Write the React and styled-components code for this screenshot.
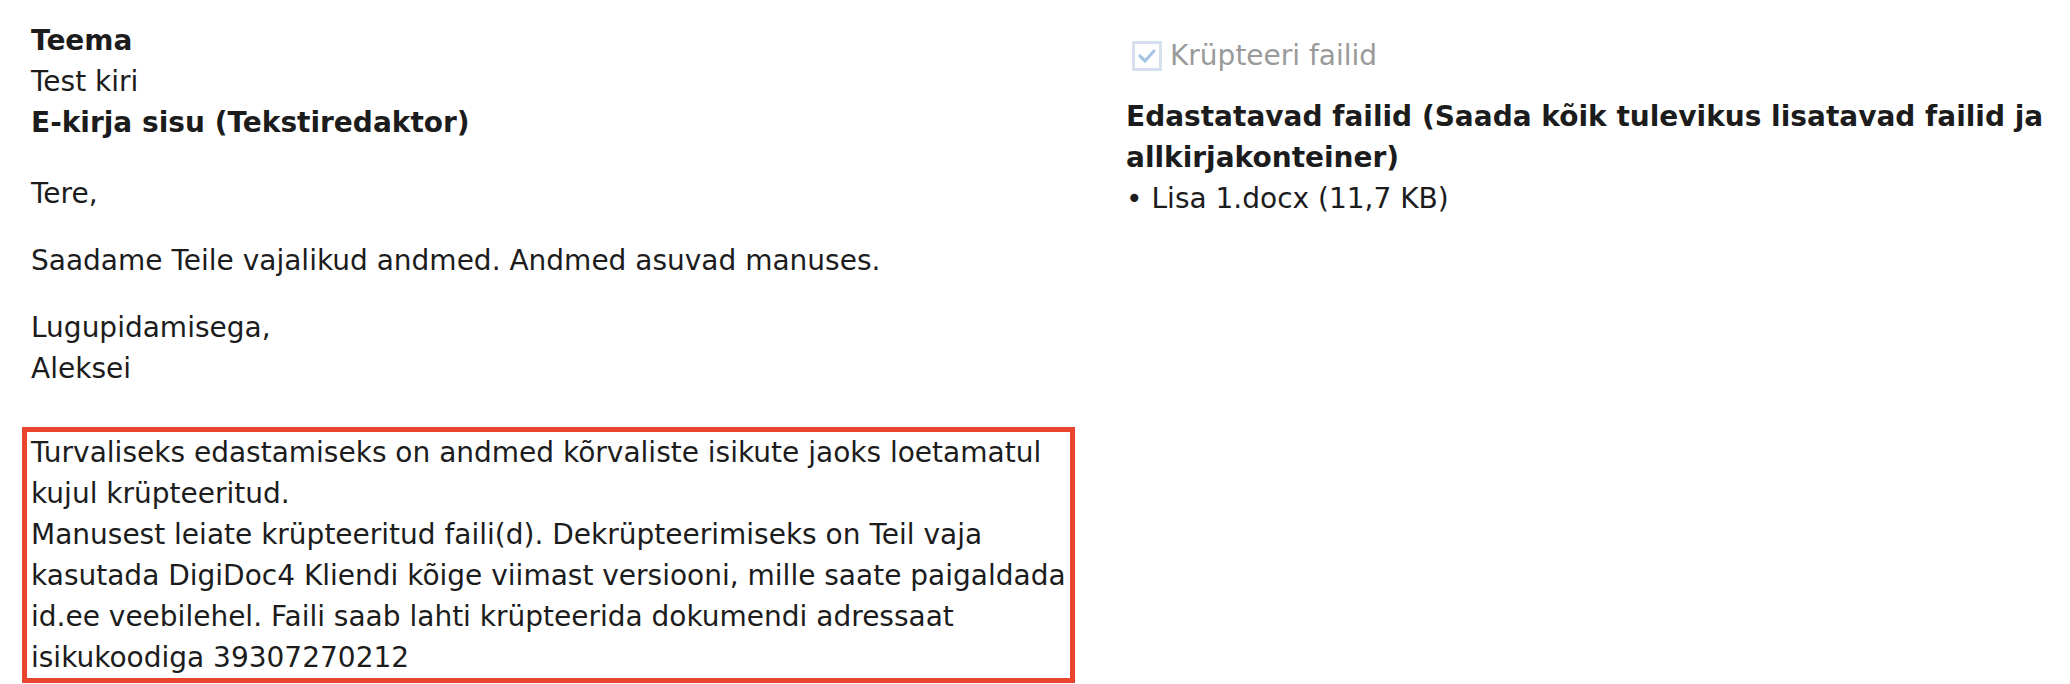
import React from 'react';
import styled, { createGlobalStyle } from 'styled-components';

const GlobalStyle = createGlobalStyle`
  html, body {
    margin: 0;
    background: #fff;
  }
  body {
    font-family: "DejaVu Sans", Verdana, sans-serif;
    font-size: 28px;
    line-height: 41px;
    color: #1c1c1c;
  }
`;

const Page = styled.div`
  display: grid;
  grid-template-columns: 1053px 1fr;
  column-gap: 51px;
  padding: 0 22px;
`;

const Column = styled.div`
  padding-top: ${p => p.$top}px;
  display: flex;
  flex-direction: column;
`;

const Field = styled.div`
  padding-left: 9px;
`;

const Label = styled.div`
  font-weight: bold;
`;

const Value = styled.div``;

const Message = styled.div`
  padding-left: 9px;
  margin-top: 4px;

  p {
    margin: 26px 0 0;
  }
`;

const Notice = styled.div`
  margin-top: 38px;
  border: 5px solid #e8452c;
  padding: 0 4px;
`;

const CheckRow = styled.label`
  display: flex;
  align-items: center;
  gap: 8px;
  color: #9a9a9a;
`;

const CheckBox = styled.span`
  box-sizing: border-box;
  width: 30px;
  height: 30px;
  margin-left: 6px;
  border: 3px solid #d4e0ee;
  background: #fff;
  display: flex;
  align-items: center;
  justify-content: center;
`;

const FilesTitle = styled.div`
  margin-top: 20px;
  font-weight: bold;
`;

const FileList = styled.ul`
  margin: 0;
  padding: 0;
  list-style: none;
`;

const FileItem = styled.li`
  &::before {
    content: "•";
    margin-right: 9px;
  }
`;

const CheckIcon = () => (
  <svg width="20" height="16" viewBox="0 0 20 16">
    <polyline points="3,8 8,13 17,3" fill="none" stroke="#a8c4e3" strokeWidth="3.2" strokeLinecap="round" strokeLinejoin="round" />
  </svg>
);

const App = () => {
  return (
    <>
      <GlobalStyle />
      <Page>
        <Column $top={20}>
          <Field>
            <Label>Teema</Label>
            <Value>Test kiri</Value>
            <Label>E-kirja sisu (Tekstiredaktor)</Label>
          </Field>
          <Message>
            <p>Tere,</p>
            <p>Saadame Teile vajalikud andmed. Andmed asuvad manuses.</p>
            <p>Lugupidamisega,<br />Aleksei</p>
          </Message>
          <Notice>
            Turvaliseks edastamiseks on andmed kõrvaliste isikute jaoks loetamatul kujul krüpteeritud.
            <br />
            Manusest leiate krüpteeritud faili(d). Dekrüpteerimiseks on Teil vaja kasutada DigiDoc4 Kliendi kõige viimast versiooni, mille saate paigaldada id.ee veebilehel. Faili saab lahti krüpteerida dokumendi adressaat isikukoodiga 39307270212
          </Notice>
        </Column>
        <Column $top={35}>
          <CheckRow>
            <CheckBox><CheckIcon /></CheckBox>
            Krüpteeri failid
          </CheckRow>
          <FilesTitle>Edastatavad failid (Saada kõik tulevikus lisatavad failid ja allkirjakonteiner)</FilesTitle>
          <FileList>
            <FileItem>Lisa 1.docx (11,7 KB)</FileItem>
          </FileList>
        </Column>
      </Page>
    </>
  );
};

export default App;
